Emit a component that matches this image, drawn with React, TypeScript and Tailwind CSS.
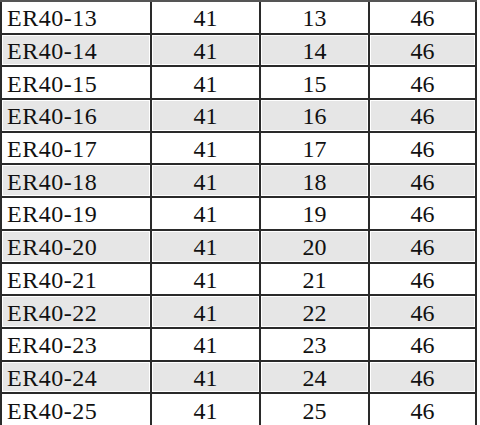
const rows = Array.from({ length: 13 }, (_, i) => {
  const n = 13 + i
  return { model: `ER40-${n}`, a: 41, b: n, c: 46 }
})

export default function App() {
  return (
    <div
      className="w-[480px] h-[425px] overflow-hidden bg-white text-[#111]"
      style={{ fontFamily: '"Liberation Serif", "Times New Roman", serif' }}
    >
      <div className="flex flex-col w-[477px] border-t-2 border-[#555]">
        {rows.map((r, i) => {
          const shade = i % 2 === 1 ? 'bg-[#e6e6e6] shadow-[inset_0_0_0_1px_#fff]' : 'bg-white'
          return (
            <div
              key={r.model}
              className="grid grid-cols-[150px_109px_109px_109px] h-[32.7px] shrink-0 border-b-2 border-[#2a2a2a] text-[24px] leading-none"
            >
              <div className={`flex items-center pl-[5px] pt-[2px] border-l-2 border-[#2a2a2a] tracking-[0.5px] ${shade}`}>
                {r.model}
              </div>
              <div className={`flex items-center justify-center pt-[2px] border-l-2 border-[#2a2a2a] ${shade}`}>
                {r.a}
              </div>
              <div className={`flex items-center justify-center pt-[2px] border-l-2 border-[#2a2a2a] ${shade}`}>
                {r.b}
              </div>
              <div className={`flex items-center justify-center pt-[2px] border-x-2 border-[#2a2a2a] ${shade}`}>
                {r.c}
              </div>
            </div>
          )
        })}
      </div>
    </div>
  )
}
